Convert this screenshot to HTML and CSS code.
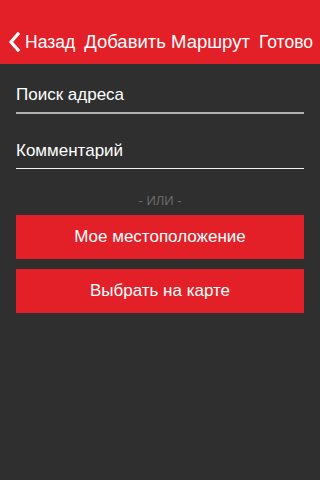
FILE: index.html
```html
<!DOCTYPE html>
<html lang="ru">
<head>
<meta charset="utf-8">
<link rel="stylesheet" href="styles.css">
</head>
<body>
<header class="navbar">
  <a class="nav-back">
    <svg class="chevron" width="12" height="20" viewBox="0 0 12 20"><path d="M10 2 L3 10 L10 18" fill="none" stroke="#fff" stroke-width="3.2" stroke-linecap="square" stroke-linejoin="miter"/></svg>
    <span>Назад</span>
  </a>
  <span class="nav-title">Добавить Маршрут</span>
  <a class="nav-done">Готово</a>
</header>
<main class="content">
  <div class="field field-search"><span>Поиск адреса</span></div>
  <div class="field field-comment"><span>Комментарий</span></div>
  <div class="divider">- ИЛИ -</div>
  <div class="actions">
    <button class="btn">Мое местоположение</button>
    <button class="btn">Выбрать на карте</button>
  </div>
</main>
</body>
</html>
```
FILE: styles.css
```css
html, body {
  margin: 0;
  padding: 0;
  height: 100%;
  background: #2f2f2f;
  font-family: "Liberation Sans", Arial, sans-serif;
  color: #fff;
}
.navbar {
  height: 64px;
  box-sizing: border-box;
  padding: 20px 7px 0 8px;
  background: #e31f28;
  display: flex;
  align-items: center;
  justify-content: space-between;
  font-size: 17.5px;
}
.nav-title {
  font-size: 18.5px;
}
.nav-back {
  display: flex;
  align-items: center;
  gap: 5px;
}
.chevron {
  display: block;
}
.content {
  padding: 0 16px;
}
.field {
  box-sizing: border-box;
  display: flex;
  align-items: flex-end;
  font-size: 17px;
  padding-bottom: 7px;
}
.field-search {
  height: 50px;
  border-bottom: 2px solid #b0b0b0;
}
.field-comment {
  height: 55px;
  border-bottom: 1.5px solid #f2f2f2;
}
.divider {
  text-align: center;
  color: #6a6a6a;
  font-size: 13px;
  margin-top: 24px;
  line-height: 16px;
}
.actions {
  display: flex;
  flex-direction: column;
  gap: 10px;
  margin-top: 6px;
}
.btn {
  height: 44px;
  border: none;
  background: #e31f28;
  color: #fff;
  font-family: "Liberation Sans", Arial, sans-serif;
  font-size: 17px;
  padding: 0;
}
```
